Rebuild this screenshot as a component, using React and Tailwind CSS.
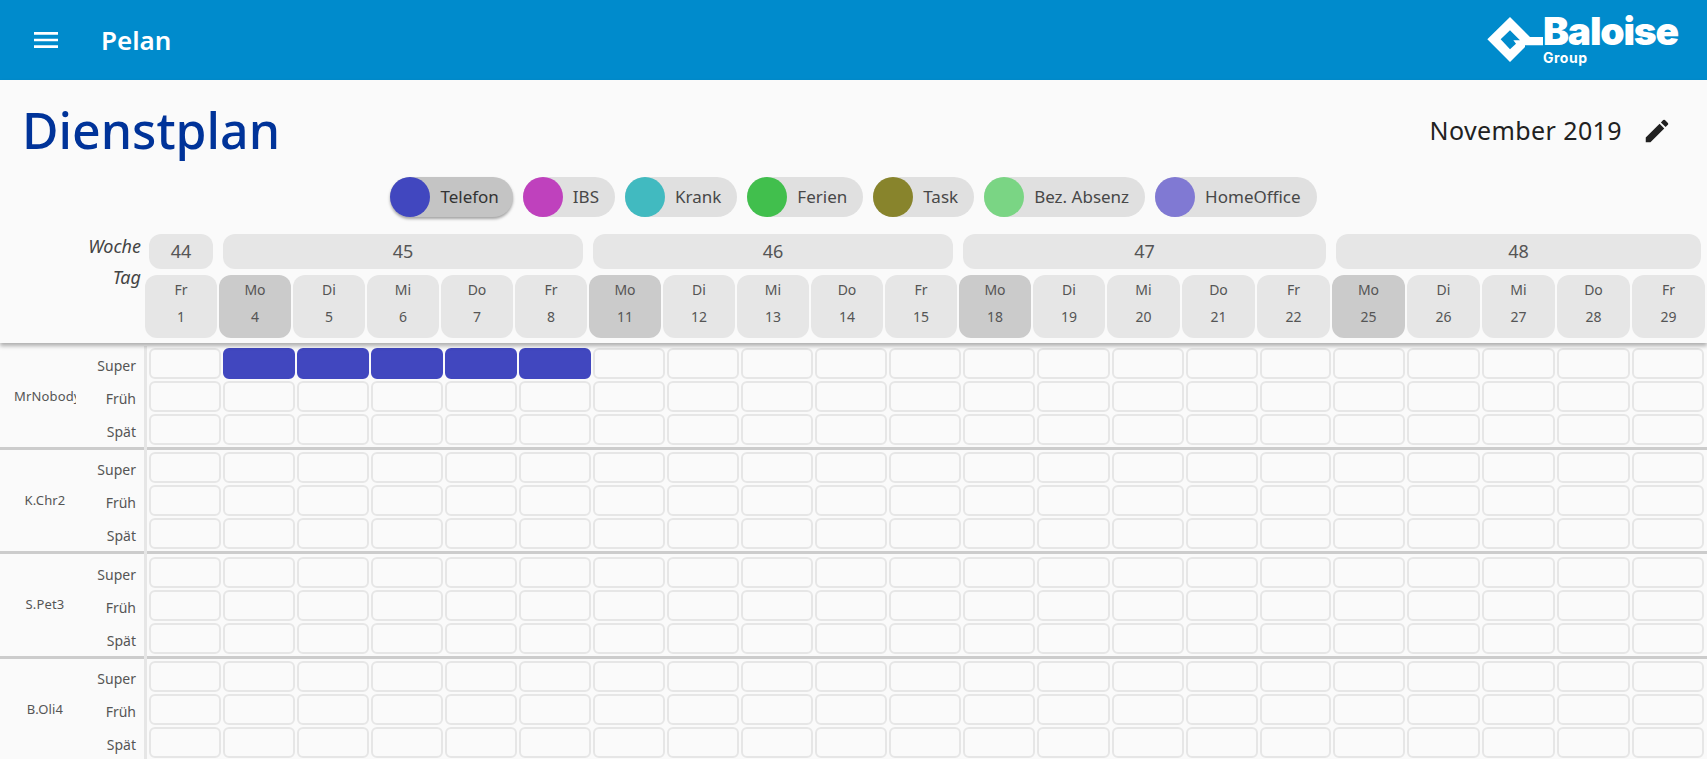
import React from "react";
import { MdMenu, MdEdit } from "react-icons/md";

const font = { fontFamily: "'Noto Sans', sans-serif" };

const legend = [
  { label: "Telefon", color: "bg-[#4147bf]", active: true },
  { label: "IBS", color: "bg-[#bf41bd]" },
  { label: "Krank", color: "bg-[#41bac0]" },
  { label: "Ferien", color: "bg-[#41bf4d]" },
  { label: "Task", color: "bg-[#88842c]" },
  { label: "Bez. Absenz", color: "bg-[#7ad584]" },
  { label: "HomeOffice", color: "bg-[#8079d3]" },
];

const weeks = [
  { nr: 44, span: "col-span-1" },
  { nr: 45, span: "col-span-5" },
  { nr: 46, span: "col-span-5" },
  { nr: 47, span: "col-span-5" },
  { nr: 48, span: "col-span-5" },
];

const names = ["Mo", "Di", "Mi", "Do", "Fr"];
const days = [{ name: "Fr", nr: 1 }];
[4, 11, 18, 25].forEach((start) => {
  names.forEach((name, i) => days.push({ name, nr: start + i }));
});

const people = ["MrNobody", "K.Chr2", "S.Pet3", "B.Oli4"];
const shifts = ["Super", "Früh", "Spät"];

const headCols = "grid-cols-[repeat(13,74px)_repeat(8,75px)]";
const bodyCols = "grid-cols-[repeat(12,74px)_75px_74px_74px_73px_74px_75px_75px_75px_74px]";

function Logo() {
  return (
    <div className="self-start flex items-start pr-[30px] pt-[12px] text-white">
      <svg width="63" height="54" viewBox="0 0 189 162" className="shrink-0">
        <path
          fill="#fff"
          fillRule="evenodd"
          d="M90 15 L150 75 H189 V100 H135 V105 L90 150 L22 82 Z M62 82 L90 55 L120 85 H100 L108 95 L90 112 Z"
        />
      </svg>
      <div className="w-[134px] flex flex-col whitespace-nowrap" style={{ fontFamily: "Inter, sans-serif" }}>
        <span className="text-[39px] leading-[30px] mt-[4px] font-black tracking-[-1.2px]">Baloise</span>
        <span className="text-[14px] leading-[16px] mt-[4px] font-bold tracking-[0.5px]">Group</span>
      </div>
    </div>
  );
}

function Chip({ label, color, active }) {
  return (
    <div
      className={`flex items-center h-10 rounded-full text-[17px] ${
        active ? "pr-[14px] bg-[#c4c4c4] text-[#333] shadow-[0_2px_3px_rgba(0,0,0,0.35)]" : "pr-[16px] bg-[#e0e0e0] text-[#484848]"
      }`}
    >
      <span className={`w-10 h-10 rounded-full mr-[10px] ${color}`} />
      <span>{label}</span>
    </div>
  );
}

function PersonRows({ name, first }) {
  return (
    <div className="flex border-b-[3px] border-[#cccccc] pt-[2.2px]">
      <div className="flex w-[147px] shrink-0 border-r-[3px] border-[#e6e6e6] -mt-[2.2px] pt-[2.2px] -mb-[3px] pb-[3px]">
        <div className="w-[90px] pl-[14px] pr-[14px] mb-[2px] flex items-center justify-center text-[13px] tracking-[0.15px] text-[#555] overflow-hidden whitespace-nowrap">
          <span className="block w-[62px] overflow-hidden text-center">{name}</span>
        </div>
        <div className="flex-1 flex flex-col pr-[8px]">
          {shifts.map((s) => (
            <div key={s} className="h-[33px] flex items-center justify-end pt-[2px] text-[14px] text-[#555]">
              {s}
            </div>
          ))}
        </div>
      </div>
      <div className="flex-1 pl-[2px] flex flex-col">
        {shifts.map((s, row) => (
          <div key={s} className={`grid ${bodyCols} h-[33px]`}>
            {days.map((d, i) => {
              const on = first && row === 0 && i >= 1 && i <= 5;
              return (
                <div
                  key={d.nr}
                  className={`h-[31px] w-[calc(100%-2px)] rounded-[6px] border-2 ${
                    on ? "bg-[#4147bf] border-[#4147bf]" : "border-[#e6e6e6]"
                  }`}
                />
              );
            })}
          </div>
        ))}
      </div>
    </div>
  );
}

export default function App() {
  return (
    <div className="h-screen overflow-hidden bg-[#fafafa]" style={font}>
      <header className="h-20 bg-[#008bcc] flex items-center justify-between text-white">
        <div className="flex items-center">
          <MdMenu className="w-8 h-8 ml-[30px]" />
          <span className="ml-[39px] text-[26px] font-semibold">Pelan</span>
        </div>
        <Logo />
      </header>

      <div className="relative z-10 bg-[#fafafa] pb-[5px] shadow-[0_3px_4px_rgba(0,0,0,0.3)]">
        <div className="h-[97px] flex items-center justify-between pl-[22px] pr-[35px]">
          <h1 className="text-[50px] mt-[2px] leading-none font-medium text-[#003399]">Dienstplan</h1>
          <div className="flex items-center mt-[4px] text-[#212121]">
            <span className="text-[25px] tracking-[0.4px]">November 2019</span>
            <MdEdit className="w-[30px] h-[30px] ml-[20px]" />
          </div>
        </div>

        <div className="flex justify-center gap-[10px]">
          {legend.map((item) => (
            <Chip key={item.label} {...item} />
          ))}
        </div>

        <div className="flex mt-[17px]">
          <div className="w-[144px] shrink-0 pr-[3px] text-right italic text-[18px] leading-[26px] text-[#444]">
            <div className="-mt-[1px]">Woche</div>
            <div className="mt-[5px]">Tag</div>
          </div>
          <div className="flex-1">
            <div className={`grid ${headCols}`}>
              {weeks.map((w) => (
                <div key={w.nr} className={`${w.span} mx-[5px] h-[35px] rounded-xl bg-[#e6e6e6] flex items-center justify-center text-[18px] text-[#555]`}>
                  {w.nr}
                </div>
              ))}
            </div>
            <div className={`grid ${headCols} mt-[6px]`}>
              {days.map((d) => (
                <div
                  key={d.nr}
                  className={`mx-[1px] h-[63px] rounded-xl flex flex-col items-center text-[14px] text-[#555] ${
                    d.name === "Mo" ? "bg-[#cbcbcb]" : "bg-[#e6e6e6]"
                  }`}
                >
                  <span className="mt-[5px] leading-5">{d.name}</span>
                  <span className="mt-[7px] leading-5">{d.nr}</span>
                </div>
              ))}
            </div>
          </div>
        </div>
      </div>

      <div className="mt-[3px]">
        {people.map((name, i) => (
          <PersonRows key={name} name={name} first={i === 0} />
        ))}
      </div>
    </div>
  );
}
